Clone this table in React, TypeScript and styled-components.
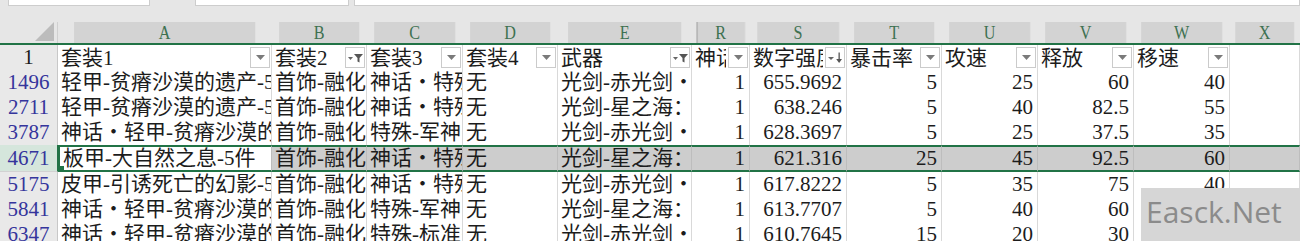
import React from "react";
import styled, { createGlobalStyle } from "styled-components";

const GlobalStyle = createGlobalStyle`
  html, body {
    margin: 0;
    padding: 0;
    background: #ffffff;
    overflow: hidden;
  }
`;

const COLS = "58px 214px 95px 96px 95px 134px 58px 97px 95px 96px 96px 96px 1fr";
const GREEN = "#217346";
const FONT = `"Liberation Serif", "Noto Sans CJK SC", serif`;

type RowData = {
  n: string;
  a: string;
  b: string;
  c: string;
  d: string;
  e: string;
  r: string;
  s: string;
  t: string;
  u: string;
  v: string;
  w: string;
  selected?: boolean;
};

const rows: RowData[] = [
  { n: "1496", a: "轻甲-贫瘠沙漠的遗产-5件", b: "首饰-融化的灵魂", c: "神话・特殊-能量", d: "无", e: "光剑-赤光剑・赤焰", r: "1", s: "655.9692", t: "5", u: "25", v: "60", w: "40" },
  { n: "2711", a: "轻甲-贫瘠沙漠的遗产-5件", b: "首饰-融化的灵魂", c: "神话・特殊-能量", d: "无", e: "光剑-星之海：巴德纳尔", r: "1", s: "638.246", t: "5", u: "40", v: "82.5", w: "55" },
  { n: "3787", a: "神话・轻甲-贫瘠沙漠的遗产", b: "首饰-融化的灵魂", c: "特殊-军神的遗书", d: "无", e: "光剑-赤光剑・赤焰", r: "1", s: "628.3697", t: "5", u: "25", v: "37.5", w: "35" },
  { n: "4671", a: "板甲-大自然之息-5件", b: "首饰-融化的灵魂", c: "神话・特殊-能量", d: "无", e: "光剑-星之海：巴德纳尔", r: "1", s: "621.316", t: "25", u: "45", v: "92.5", w: "60", selected: true },
  { n: "5175", a: "皮甲-引诱死亡的幻影-5件", b: "首饰-融化的灵魂", c: "神话・特殊-能量", d: "无", e: "光剑-赤光剑・赤焰", r: "1", s: "617.8222", t: "5", u: "35", v: "75", w: "40" },
  { n: "5841", a: "神话・轻甲-贫瘠沙漠的遗产", b: "首饰-融化的灵魂", c: "特殊-军神的遗书", d: "无", e: "光剑-星之海：巴德纳尔", r: "1", s: "613.7707", t: "5", u: "40", v: "60", w: "55" },
  { n: "6347", a: "神话・轻甲-贫瘠沙漠的遗产", b: "首饰-融化的灵魂", c: "特殊-标准型", d: "无", e: "光剑-赤光剑・赤焰", r: "1", s: "610.7645", t: "15", u: "20", v: "30", w: "40" },
];

type Filter = "drop" | "funnel" | "sort";
const headers: { label: string; filter: Filter }[] = [
  { label: "套装1", filter: "drop" },
  { label: "套装2", filter: "funnel" },
  { label: "套装3", filter: "drop" },
  { label: "套装4", filter: "drop" },
  { label: "武器", filter: "funnel" },
  { label: "神话", filter: "drop" },
  { label: "数字强度", filter: "sort" },
  { label: "暴击率", filter: "drop" },
  { label: "攻速", filter: "drop" },
  { label: "释放", filter: "drop" },
  { label: "移速", filter: "drop" },
];

const letters = ["A", "B", "C", "D", "E", "R", "S", "T", "U", "V", "W", "X"];

const FilterIcon = ({ kind }: { kind: Filter }) => {
  if (kind === "funnel") {
    return (
      <svg width="15" height="10" viewBox="0 0 15 10">
        <polygon points="0,4 5,4 2.5,7" fill="#666" />
        <polygon points="6,1 15,1 11.5,5 11.5,9.5 9.5,8.5 9.5,5" fill="#555" />
      </svg>
    );
  }
  if (kind === "sort") {
    return (
      <svg width="15" height="12" viewBox="0 0 15 12">
        <polygon points="0,5 6,5 3,8" fill="#666" />
        <rect x="10.5" y="0.5" width="1.3" height="9" fill="#555" />
        <polygon points="8.2,7 14,7 11.1,11" fill="#555" />
      </svg>
    );
  }
  return (
    <svg width="9" height="5" viewBox="0 0 9 5">
      <polygon points="0,0 9,0 4.5,5" fill="#7a7a7a" />
    </svg>
  );
};

export default function App() {
  return (
    <>
      <GlobalStyle />
      <Sheet>
        <Toolbar>
          <Field $w={140} $ml={8} />
          <Field $w={152} $ml={45} />
          <Field $grow $ml={5} />
        </Toolbar>

        <ColumnHeaders>
          <Corner>
            <svg width="19" height="19" viewBox="0 0 19 19">
              <polygon points="0,19 19,19 19,0" fill="#bcbcbc" />
            </svg>
          </Corner>
          {letters.map((l) => (
            <ColLetter key={l} $gap={l === "R"}>
              {l}
            </ColLetter>
          ))}
        </ColumnHeaders>

        <Row>
          <RowHead $plain>1</RowHead>
          {headers.map((h) => (
            <FilterCell key={h.label}>
              <Label>{h.label}</Label>
              <FilterButton>
                <FilterIcon kind={h.filter} />
              </FilterButton>
            </FilterCell>
          ))}
          <Cell />
        </Row>

        {rows.map((r) => (
          <Row key={r.n} $selected={r.selected}>
            <RowHead $selected={r.selected}>{r.n}</RowHead>
            <Cell $selected={r.selected} $active={r.selected}>
              {r.a}
              {r.selected && <FillHandle />}
            </Cell>
            <Cell $selected={r.selected}>{r.b}</Cell>
            <Cell $selected={r.selected}>{r.c}</Cell>
            <Cell $selected={r.selected}>{r.d}</Cell>
            <Cell $selected={r.selected}>{r.e}</Cell>
            <Cell $selected={r.selected} $num>{r.r}</Cell>
            <Cell $selected={r.selected} $num>{r.s}</Cell>
            <Cell $selected={r.selected} $num>{r.t}</Cell>
            <Cell $selected={r.selected} $num>{r.u}</Cell>
            <Cell $selected={r.selected} $num>{r.v}</Cell>
            <Cell $selected={r.selected} $num>{r.w}</Cell>
            <Cell $selected={r.selected} />
          </Row>
        ))}

        <Watermark>Easck.Net</Watermark>
      </Sheet>
    </>
  );
}

const Sheet = styled.div`
  position: relative;
  width: 1300px;
  height: 241px;
  overflow: hidden;
  background: #ffffff;
  font-family: ${FONT};
`;

const Toolbar = styled.div`
  display: flex;
  align-items: flex-start;
  height: 22px;
  background: #e6e6e6;
`;

const Field = styled.div<{ $w?: number; $ml?: number; $grow?: boolean }>`
  height: 5px;
  width: ${(p) => (p.$w ? `${p.$w}px` : "auto")};
  flex: ${(p) => (p.$grow ? "1" : "none")};
  margin-left: ${(p) => p.$ml ?? 0}px;
  background: #ffffff;
  border: 1px solid #cdcdcd;
  border-top: none;
`;

const ColumnHeaders = styled.div`
  display: grid;
  grid-template-columns: ${COLS};
  height: 21px;
  border-bottom: 2px solid ${GREEN};
  background: #e6e6e6;
`;

const Corner = styled.div`
  display: flex;
  justify-content: flex-end;
  align-items: flex-end;
  padding: 0 3px 2px 0;
  background: #e6e6e6;
  border-right: 1px solid #d0d0d0;
`;

const ColLetter = styled.div<{ $gap?: boolean }>`
  display: flex;
  align-items: center;
  justify-content: center;
  background: #d3d3d3;
  border-right: 1px solid #e3e3e3;
  box-shadow: ${(p) => (p.$gap ? "inset 2px 0 0 #b8b8b8" : "none")};
  color: #3e7151;
  font-family: "Liberation Serif", serif;
  font-size: 19px;
  line-height: 21px;
  transform: scaleX(0.85);
  transform-origin: center;
`;

const Row = styled.div<{ $selected?: boolean }>`
  display: grid;
  grid-template-columns: ${COLS};
  height: ${(p) => (p.$selected ? 27 : 25)}px;
`;

const RowHead = styled.div<{ $plain?: boolean; $selected?: boolean }>`
  display: flex;
  align-items: center;
  justify-content: center;
  background: ${(p) => (p.$selected ? "#d5e6dc" : "#e9e9e9")};
  border-bottom: 1px solid #d2d2d2;
  border-right: 1px solid ${(p) => (p.$selected ? GREEN : "#c8c8c8")};
  color: ${(p) => (p.$plain ? "#1a1a1a" : "#35359c")};
  font-family: "Liberation Serif", serif;
  font-size: 21px;
`;

const Cell = styled.div<{ $num?: boolean; $selected?: boolean; $active?: boolean }>`
  position: relative;
  overflow: hidden;
  white-space: nowrap;
  padding: 0 ${(p) => (p.$num ? "4px" : "0")} 0 ${(p) => (p.$num ? "0" : "3px")};
  text-align: ${(p) => (p.$num ? "right" : "left")};
  font-size: 21px;
  line-height: ${(p) => (p.$selected ? 23 : 24)}px;
  color: #1c1c1c;
  background: ${(p) => (p.$selected && !p.$active ? "#cdcdcd" : "#ffffff")};
  border-right: 1px solid ${(p) => (p.$selected ? "#bdbdbd" : "#d9d9d9")};
  border-top: ${(p) => (p.$selected ? `2px solid ${GREEN}` : "none")};
  border-bottom: ${(p) => (p.$selected ? `2px solid ${GREEN}` : "1px solid #d9d9d9")};
  border-left: ${(p) => (p.$active ? `2px solid ${GREEN}` : "none")};
`;

const FillHandle = styled.span`
  position: absolute;
  left: 0;
  bottom: 0;
  width: 4px;
  height: 4px;
  background: ${GREEN};
`;

const FilterCell = styled.div`
  display: flex;
  align-items: center;
  gap: 2px;
  overflow: hidden;
  padding: 0 1px 0 3px;
  font-size: 21px;
  line-height: 24px;
  color: #1c1c1c;
  background: #ffffff;
  border-right: 1px solid #d9d9d9;
  border-bottom: 1px solid #d9d9d9;
`;

const Label = styled.span`
  flex: 1;
  min-width: 0;
  overflow: hidden;
  white-space: nowrap;
`;

const FilterButton = styled.div`
  flex: none;
  display: flex;
  align-items: center;
  justify-content: center;
  width: 18px;
  height: 19px;
  background: #ffffff;
  border: 1px solid #cbcbcb;
`;

const Watermark = styled.div`
  position: absolute;
  left: 1141px;
  top: 188px;
  width: 170px;
  height: 60px;
  padding: 6px 0 0 5px;
  box-sizing: border-box;
  background: #d6d6d6;
  color: #8b8b8b;
  font-family: "Open Sans", "Liberation Sans", sans-serif;
  font-size: 30px;
  line-height: 36px;
`;
